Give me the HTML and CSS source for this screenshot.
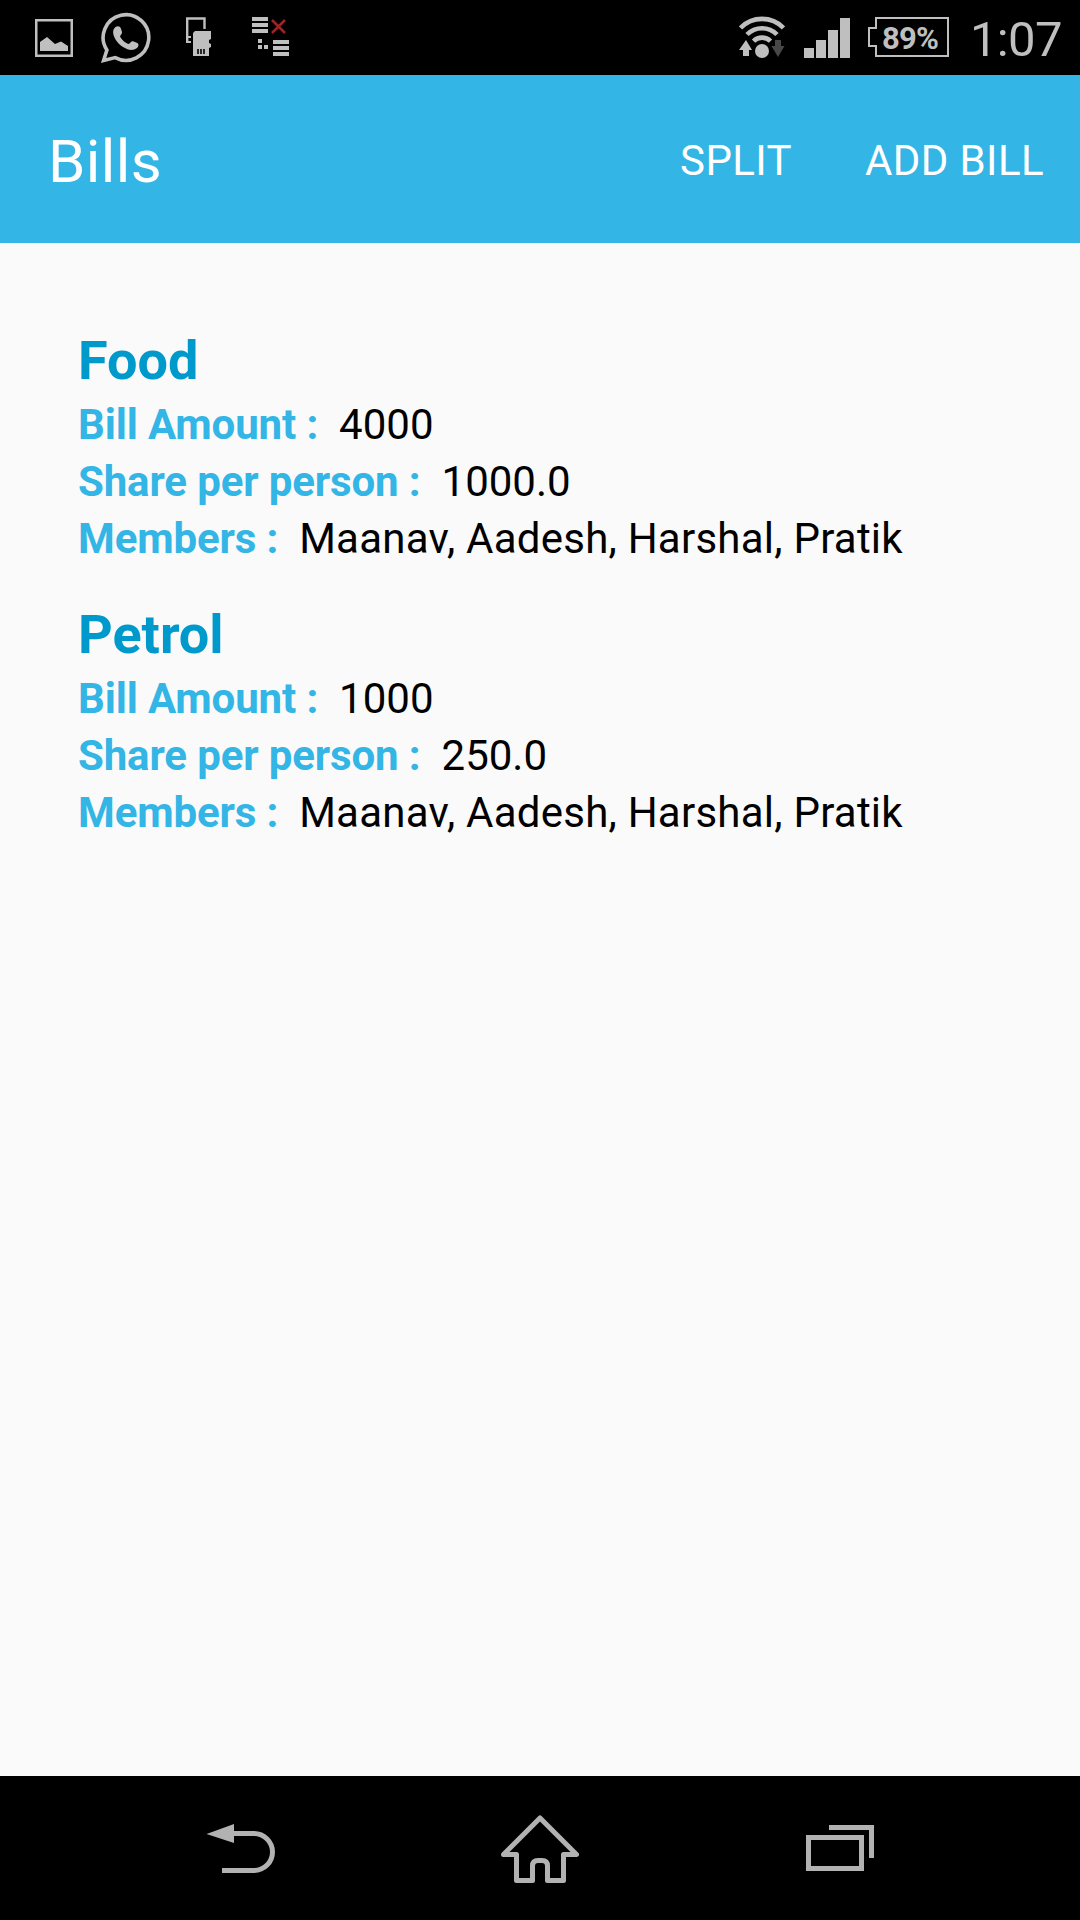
FILE: index.html
```html
<!DOCTYPE html>
<html lang="en">
<head>
<meta charset="utf-8">
<title>Bills</title>
<link rel="stylesheet" href="styles.css">
</head>
<body>
<div class="screen">
  <div class="status">
    <div class="notifications">
      <svg width="38" height="75" viewBox="35 0 38 75"><path d="M36.25 20.25h35.5v35.5h-35.5z" fill="none" stroke="currentColor" stroke-width="2.5"/><path d="M40 51V42l7-5 8 7 6-2.5 7 4.500V51z" fill="currentColor"/></svg>
      <svg width="50" height="75" viewBox="101 0 50 75"><path fill="none" stroke="currentColor" stroke-width="3.6" d="M103.600 60.500l3.300-10.500A22.800 22.800 0 1 1 115.200 57.600z"/><path fill="currentColor" d="M115.500 27c2.500-1.500 4.600-.6 5.300 1.300l1.200 3.700c.5 1.600-1.700 3.200-2 4.300 1.300 3.200 5.200 6.800 8.500 7.800 1.600-.6 2.600-3.200 4.500-2.800l4.400 1.700c1.600 1 1.400 3.500-.4 5-2.600 2.200-6.500 2.400-9.500 1.200-7-2.700-12-8-14-14.200-.9-3.200-.2-6.500 2-8z"/></svg>
      <svg width="25" height="75" viewBox="186 0 25 75"><path d="M187.200 43V18.500h17.300V29" fill="none" stroke="currentColor" stroke-width="2.400"/><path d="M186 36h5v2h-3v3h3v2h-5z" fill="currentColor"/><path d="M195 31h16v8l-2 1v3l2 1v3l-2 1v8h-16V33z" fill="currentColor"/><path d="M198 49v5M201 49v5M204 49v5" stroke="#000" stroke-width="1.600"/></svg>
      <svg width="37" height="75" viewBox="252 0 37 75"><path d="M252 17h16v4h-16zM252 23h16v4h-16zM252 29h16v4h-16zM258 39h4v4h-4zM258 45h4v4h-4zM264 45h4v4h-4zM273 40h16v4h-16zM273 46h16v4h-16zM273 52h16v4h-16z" fill="currentColor"/><path d="M272 20l13 13M285 20l-13 13" stroke="#a52022" stroke-width="2.600"/></svg>
    </div>
    <div class="indicators">
      <svg width="46" height="75" viewBox="739 0 46 75"><g fill="none" stroke="currentColor" stroke-width="4.600"><path d="M740.500 28A30 30 0 0 1 783.500 28"/><path d="M747 34.500A21 21 0 0 1 777 34.500"/><path d="M753.500 41.200A12 12 0 0 1 770.500 41.200"/></g><circle cx="762" cy="51" r="7" fill="currentColor"/><path d="M746 40l6 10h-3v6h-6v-6h-4z" fill="currentColor"/><path d="M775 40h6v6h3.500L778 57l-6.500-11h3.500z" fill="#484848"/></svg>
      <svg width="46" height="75" viewBox="804 0 46 75"><path d="M804 48h10v10h-10zM816 40h10v18h-10zM828 30h10v28h-10zM840 18h10v40h-10z" fill="currentColor"/></svg>
      <div class="battery">
        <svg class="battery-outline" width="81" height="75" viewBox="868 0 81 75"><path d="M876 18h72v38h-72V46h-7V28h7z" fill="none" stroke="currentColor" stroke-width="2"/></svg>
        <span class="battery-level">89%</span>
      </div>
      <span class="clock">1:07</span>
    </div>
  </div>
  <header class="app-bar">
    <h1 class="title">Bills</h1>
    <nav class="actions"><span class="split">SPLIT</span><span class="add">ADD BILL</span></nav>
  </header>
  <main class="bills">
    <section class="bill">
      <h2 class="name">Food</h2>
      <p class="row"><b class="label">Bill Amount :</b><span>4000</span></p>
      <p class="row"><b class="label">Share per person :</b><span>1000.0</span></p>
      <p class="row"><b class="label">Members :</b><span class="members">Maanav, Aadesh, Harshal, Pratik</span></p>
    </section>
    <section class="bill">
      <h2 class="name">Petrol</h2>
      <p class="row"><b class="label">Bill Amount :</b><span>1000</span></p>
      <p class="row"><b class="label">Share per person :</b><span>250.0</span></p>
      <p class="row"><b class="label">Members :</b><span class="members">Maanav, Aadesh, Harshal, Pratik</span></p>
    </section>
  </main>
  <footer class="nav">
    <svg width="70" height="144" viewBox="206 1776 70 144"><path d="M206.500 1834l27.500-10v19z" fill="currentColor"/><path d="M233 1833.500h21a18.500 18.500 0 0 1 0 37h-32" fill="none" stroke="currentColor" stroke-width="5"/></svg>
    <svg class="home" width="78" height="144" viewBox="501 1776 78 144"><path d="M503.500 1854.500L540 1818l36.500 36.500H563.500v26H547.500V1866q0-5.500-5.500-5.500h-4q-5.500 0-5.500 5.500v14.500H516.500v-26z" fill="none" stroke="currentColor" stroke-width="5" stroke-linejoin="round"/></svg>
    <svg width="68" height="144" viewBox="806 1776 68 144"><path d="M808.500 1837.500h53v31h-53zM829 1827.500h42.500V1858" fill="none" stroke="currentColor" stroke-width="5"/></svg>
  </footer>
</div>
</body>
</html>
```
FILE: styles.css
```css
* { box-sizing: border-box; }
body { margin: 0; font-family: Roboto, sans-serif; }
h1, h2, p { margin: 0; }
svg { display: block; flex: none; }
.screen { width: 1080px; height: 1920px; display: flex; flex-direction: column; background: #fafafa; }
.status { height: 75px; background: #000; color: #bfbfbf; display: flex; justify-content: space-between; padding: 0 18px 0 35px; overflow: hidden; }
.notifications { display: flex; }
.notifications svg:nth-child(2) { margin-left: 28px; }
.notifications svg:nth-child(3) { margin-left: 35px; }
.notifications svg:nth-child(4) { margin-left: 41px; }
.indicators { display: flex; gap: 19px; width: 323px; }
.battery { position: relative; width: 81px; margin-left: -1px; }
.battery-outline { position: absolute; left: 0; top: 0; }
.battery-level { position: absolute; left: 14px; top: 0; font-size: 31px; font-weight: 700; line-height: 77px; letter-spacing: -0.8px; white-space: nowrap; }
.clock { font-size: 49px; line-height: 79px; letter-spacing: -0.6px; margin-left: 2px; white-space: nowrap; }
.app-bar { height: 168px; background: #33b5e5; color: #fff; display: flex; justify-content: space-between; padding: 0 36px 0 48px; line-height: 168px; }
.title { font-size: 60px; font-weight: 400; letter-spacing: 0.4px; padding-top: 3px; }
.actions { display: flex; gap: 73px; font-size: 42px; letter-spacing: 0.4px; padding-top: 2px; }
.bills { flex: 1; padding: 82px 78px 0; display: flex; flex-direction: column; gap: 32px; }
.name { font-size: 54px; line-height: 71px; font-weight: 700; color: #0099cc; }
.row { display: flex; gap: 21px; font-size: 42px; line-height: 57px; color: #000; white-space: nowrap; }
.label { color: #33b5e5; font-weight: 700; letter-spacing: -0.13px; }
.members { letter-spacing: 0.24px; }
.nav { height: 144px; background: #000; color: #b2b2b2; display: flex; padding: 0 206px; }
.home { margin: 0 227px 0 225px; }
```
